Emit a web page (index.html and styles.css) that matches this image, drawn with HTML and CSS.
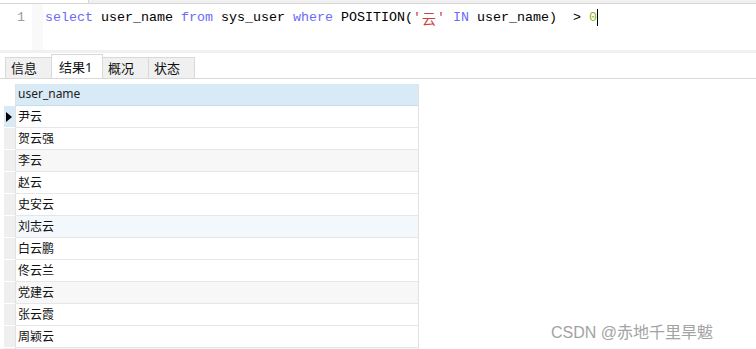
FILE: index.html
```html
<!DOCTYPE html>
<html lang="zh-CN">
<head>
    <meta charset="UTF-8">
    <title>查询</title>
    <link rel="stylesheet" href="styles.css">
</head>
<body>
    <!-- Query editor -->
    <div class="topstrip"><div class="toptab"></div></div>
    <div class="editor">
        <div class="gutter">1</div>
        <div class="fold"></div>
        <div class="code"><span class="kw">select</span> user_name <span class="kw">from</span> sys_user <span class="kw">where</span> POSITION(<span class="str">'<span class="wide">云</span>'</span> <span class="kw">IN</span> user_name)  &gt; <span class="num">0</span><span class="caret"></span></div>
    </div>
    <div class="sep"></div>

    <!-- Result tabs -->
    <div class="tabbar">
        <div class="tab">信息</div>
        <div class="tab active">结果1</div>
        <div class="tab">概况</div>
        <div class="tab">状态</div>
    </div>

    <!-- Result grid -->
    <div class="grid">
        <div class="row head"><div class="ind"></div><div class="cell">user_name</div></div>
        <div class="row current"><div class="ind"><span class="arrow"></span></div><div class="cell">尹云</div></div>
        <div class="row"><div class="ind"></div><div class="cell">贺云强</div></div>
        <div class="row gray"><div class="ind"></div><div class="cell">李云</div></div>
        <div class="row"><div class="ind"></div><div class="cell">赵云</div></div>
        <div class="row"><div class="ind"></div><div class="cell">史安云</div></div>
        <div class="row blue"><div class="ind"></div><div class="cell">刘志云</div></div>
        <div class="row"><div class="ind"></div><div class="cell">白云鹏</div></div>
        <div class="row"><div class="ind"></div><div class="cell">佟云兰</div></div>
        <div class="row gray"><div class="ind"></div><div class="cell">党建云</div></div>
        <div class="row"><div class="ind"></div><div class="cell">张云霞</div></div>
        <div class="row"><div class="ind"></div><div class="cell">周颖云</div></div>
        <div class="row blue tail"><div class="ind"></div><div class="cell"></div></div>
    </div>

    <div class="watermark">CSDN @赤地千里旱魃</div>
</body>
</html>
```

FILE: styles.css
```css
body {
    margin: 0;
    width: 756px;
    height: 349px;
    overflow: hidden;
    position: relative;
    background: #fff;
    font-family: "Noto Sans", "Noto Sans CJK SC", sans-serif;
    font-size: 12px;
    color: #111;
}
.topstrip {
    height: 3px;
    background: #f0f0f0;
    border-bottom: 1px solid #d6d6d6;
}
.toptab {
    width: 88px;
    height: 3px;
    background: #fff;
    border-right: 1px solid #d6d6d6;
}
.editor {
    display: flex;
    height: 46px;
}
.gutter {
    width: 25px;
    padding-right: 7px;
    text-align: right;
    padding-top: 6px;
    font-family: "Liberation Mono", monospace;
    font-size: 13.33px;
    line-height: 16px;
    color: #a09a90;
}
.fold {
    width: 11px;
    background: #f9f9f9;
}
.code {
    padding-left: 2px;
    padding-top: 6px;
    font-family: "Liberation Mono", "Noto Sans CJK SC", monospace;
    font-size: 13.33px;
    line-height: 16px;
    white-space: pre;
    color: #000;
}
.kw { color: #6b6bf5; }
.str { color: #d04040; }
.num { color: #8cb81c; }
.wide {
    display: inline-block;
    width: 16px;
    text-align: center;
    font-family: "Noto Sans CJK SC", sans-serif;
    font-size: 14px;
    line-height: 16px;
    vertical-align: top;
}
.caret {
    display: inline-block;
    width: 1px;
    height: 17px;
    background: #000;
    vertical-align: top;
    margin-top: -1px;
}
.sep {
    height: 3px;
    background: #f0f0f0;
}
.tabbar {
    display: flex;
    align-items: flex-end;
    height: 25px;
    padding-left: 5px;
    border-bottom: 1px solid #d9d9d9;
}
.tab {
    box-sizing: border-box;
    width: 47px;
    height: 21px;
    margin-right: -1px;
    padding-left: 5px;
    line-height: 20px;
    background: #f0f0f0;
    border: 1px solid #d9d9d9;
    border-bottom: none;
    font-size: 13px;
}
.tab.active {
    width: 52px;
    height: 24px;
    line-height: 24px;
    padding-left: 7px;
    background: #fff;
    position: relative;
    z-index: 1;
}
.grid {
    margin: 5px 0 0 4px;
    width: 415px;
}
.row {
    display: flex;
    height: 22px;
}
.row.tail { height: 2px; }
.ind {
    width: 11px;
    background: #efefef;
    border-bottom: 1px solid #fff;
    box-sizing: border-box;
    position: relative;
}
.cell {
    flex: 1;
    box-sizing: border-box;
    padding-left: 2px;
    line-height: 20px;
    border-bottom: 1px solid #e6e6e6;
    border-right: 1px solid #e2e2e2;
    border-left: 1px solid #e2e2e2;
    font-family: "Noto Sans CJK SC", sans-serif;
}
.head .ind { background: #fff; }
.head .cell {
    background: #d9eaf7;
    border-bottom-color: #c8dcec;
    font-family: "Noto Sans", "Noto Sans CJK SC", sans-serif;
    color: #222;
}
.current .ind { background: #d9eaf7; }
.arrow {
    position: absolute;
    left: 2px;
    top: 6px;
    border-left: 6px solid #000;
    border-top: 5px solid transparent;
    border-bottom: 5px solid transparent;
}
.gray .cell { background: #f7f7f7; }
.blue .cell { background: #f3f8fc; }
.watermark {
    position: absolute;
    left: 551px;
    top: 319px;
    font-family: "Liberation Sans", "Noto Sans CJK SC", sans-serif;
    font-size: 16px;
    color: #a3a3a3;
}
```
